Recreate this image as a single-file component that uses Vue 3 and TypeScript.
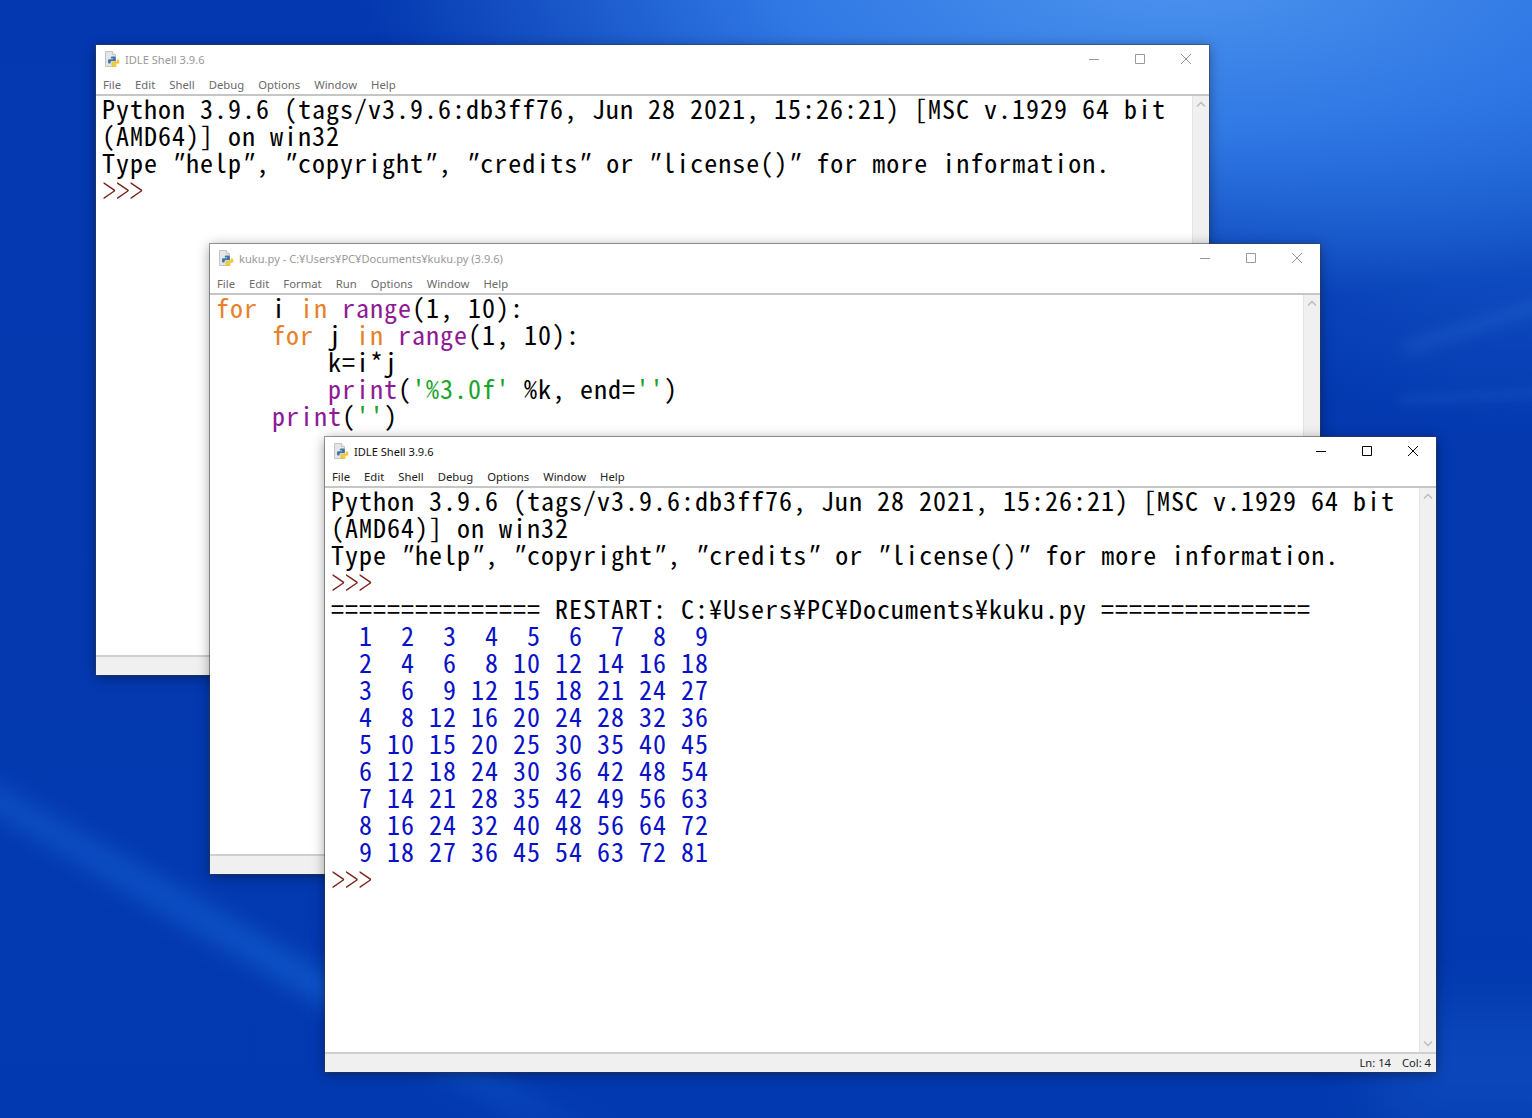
<script setup lang="ts">
interface Seg { t: string; c?: string }
interface Win {
  id: string; title: string; menus: string[]; active: boolean;
  lines: Seg[][]; status?: string[];
}
const plain = (t: string): Seg[] =>
  t.split(/(")/).filter(Boolean).map((p) => (p === '"' ? { t: p, c: 'q' } : { t: p }))
const prompt: Seg[] = [{ t: '>>>', c: 'prompt' }]
const banner = [
  plain('Python 3.9.6 (tags/v3.9.6:db3ff76, Jun 28 2021, 15:26:21) [MSC v.1929 64 bit'),
  plain('(AMD64)] on win32'),
  plain('Type "help", "copyright", "credits" or "license()" for more information.'),
  prompt,
]
const table = Array.from({ length: 9 }, (_, i) =>
  [{ t: Array.from({ length: 9 }, (_, j) => String((i + 1) * (j + 1)).padStart(3, ' ')).join(''), c: 'out' }])
const wins: Win[] = [
  { id: 'w1', title: 'IDLE Shell 3.9.6', active: false, menus: ['File', 'Edit', 'Shell', 'Debug', 'Options', 'Window', 'Help'], lines: banner },
  {
    id: 'w2', title: 'kuku.py - C:¥Users¥PC¥Documents¥kuku.py (3.9.6)', active: false,
    menus: ['File', 'Edit', 'Format', 'Run', 'Options', 'Window', 'Help'],
    lines: [
      [{ t: 'for', c: 'kw' }, { t: ' i ' }, { t: 'in', c: 'kw' }, { t: ' ' }, { t: 'range', c: 'bi' }, { t: '(1, 10):' }],
      [{ t: '    ' }, { t: 'for', c: 'kw' }, { t: ' j ' }, { t: 'in', c: 'kw' }, { t: ' ' }, { t: 'range', c: 'bi' }, { t: '(1, 10):' }],
      plain('        k=i*j'),
      [{ t: '        ' }, { t: 'print', c: 'bi' }, { t: '(' }, { t: "'%3.0f'", c: 'str' }, { t: ' %k, end=' }, { t: "''", c: 'str' }, { t: ')' }],
      [{ t: '    ' }, { t: 'print', c: 'bi' }, { t: '(' }, { t: "''", c: 'str' }, { t: ')' }],
    ],
  },
  {
    id: 'w3', title: 'IDLE Shell 3.9.6', active: true, menus: ['File', 'Edit', 'Shell', 'Debug', 'Options', 'Window', 'Help'],
    status: ['Ln: 14', 'Col: 4'],
    lines: [
      ...banner,
      plain('=============== RESTART: C:¥Users¥PC¥Documents¥kuku.py ==============='),
      ...table,
      prompt,
    ],
  },
]
</script>

<template>
  <div class="desktop">
    <div class="ray r1"></div>
    <div class="ray r2"></div>
    <div class="ray r3"></div>
    <div class="ray r4"></div>
    <div v-for="w in wins" :key="w.id" class="win" :class="[w.id, { inactive: !w.active }]">
      <div class="titlebar">
        <svg class="appicon" width="16" height="17" viewBox="0 0 16 17">
          <path d="M1.500 0.500h7l3 3v12h-10z" fill="#e6e6e6" stroke="#c4c4c4" />
          <path d="M8.500 0.500v3h3" fill="#fafafa" stroke="#c4c4c4" />
          <path d="M8 5.500h2.500a1.300 1.300 0 0 1 1.300 1.300v3.200H8a1.500 1.500 0 0 0-1.500 1.500v1H5.200a1.300 1.300 0 0 1-1.200-1.300v-1.700a1.300 1.300 0 0 1 1.300-1.300h3.700v-0.700H6.800V6.700A1.300 1.300 0 0 1 8 5.500z" fill="#3a76a8" />
          <path d="M12.800 8.500h1.200a1.300 1.300 0 0 1 1.300 1.300v1.700a1.300 1.300 0 0 1-1.300 1.300h-3.700v0.700h2.200v1.200a1.300 1.300 0 0 1-1.300 1.200H8.700a1.300 1.300 0 0 1-1.200-1.200v-2.700a1.500 1.500 0 0 1 1.500-1.500h3.800z" fill="#f2c63a" />
        </svg>
        <span class="title">{{ w.title }}</span>
        <div class="controls">
          <svg width="12" height="12" viewBox="0 0 12 12"><path d="M1 6.500h10" stroke="currentColor" fill="none" /></svg>
          <svg width="12" height="12" viewBox="0 0 12 12"><path d="M1.500 1.500h9v9h-9z" stroke="currentColor" fill="none" /></svg>
          <svg width="12" height="12" viewBox="0 0 12 12"><path d="M1 1l10 10M11 1L1 11" stroke="currentColor" fill="none" /></svg>
        </div>
      </div>
      <div class="menubar">
        <span v-for="m in w.menus" :key="m">{{ m }}</span>
      </div>
      <div class="body">
        <div class="code">
          <div v-for="(l, i) in w.lines" :key="i" class="line">
            <span v-for="(s, k) in l" :key="k" :class="s.c">{{ s.t }}</span>
          </div>
        </div>
        <div class="scroll">
          <svg width="10" height="7" viewBox="0 0 10 7"><path d="M1 5.500l4-4 4 4" fill="none" stroke="#bcbcbc" stroke-width="1.500" /></svg>
          <svg width="10" height="7" viewBox="0 0 10 7"><path d="M1 1.500l4 4 4-4" fill="none" stroke="#bcbcbc" stroke-width="1.500" /></svg>
        </div>
      </div>
      <div class="statusbar">
        <span v-for="s in w.status" :key="s">{{ s }}</span>
      </div>
    </div>
  </div>
</template>

<style>
html, body { margin: 0; padding: 0; }
</style>

<style scoped>
.desktop {
  position: relative;
  width: 1532px;
  height: 1118px;
  overflow: hidden;
  background:
    radial-gradient(ellipse 820px 330px at 1180px -30px, #4d94ee 0%, #3078e4 50%, rgba(20,90,205,0) 100%),
    radial-gradient(ellipse 500px 440px at 1532px 0px, #1f6ada 0%, rgba(15,85,200,0) 100%),
    linear-gradient(180deg, #0438b0 0%, #0339b0 100%);
}
.ray { position: absolute; pointer-events: none; }
.r1 {
  left: -120px; top: 1035px; width: 1100px; height: 30px;
  background: linear-gradient(90deg, rgba(20,100,215,.4), rgba(20,100,215,.6) 40%, rgba(20,100,215,.1) 65%);
  transform: rotate(30deg);
  filter: blur(11px);
}
.r2 {
  left: 1400px; top: 312px; width: 200px; height: 12px;
  background: rgba(60,130,225,.22);
  transform: rotate(-18deg);
  filter: blur(7px);
}
.r3 {
  left: 1400px; top: 391px; width: 200px; height: 8px;
  background: rgba(60,130,225,.16);
  transform: rotate(-3deg);
  filter: blur(5px);
}
.r4 {
  left: 1380px; top: 1010px; width: 220px; height: 120px;
  background: rgba(20,85,200,.5);
  filter: blur(30px);
}
.win {
  position: absolute;
  display: flex;
  flex-direction: column;
  box-sizing: border-box;
  background: #fff;
  box-shadow: 0 2px 12px rgba(0,0,0,.4), 0 0 0 1px rgba(70,70,70,.5);
}
.w1 { left: 96px; top: 45px; width: 1113px; height: 630px; }
.w2 { left: 210px; top: 244px; width: 1110px; height: 630px; }
.w3 { left: 325px; top: 437px; width: 1111px; height: 635px; }
.titlebar {
  height: 28px;
  flex: none;
  display: flex;
  align-items: center;
  padding-left: 8px;
  gap: 5px;
  font: 11.1px "Noto Sans", "Open Sans", sans-serif;
  color: #111;
}
.w1 .title, .w2 .title { color: #999; }
.appicon { flex: none; }
.controls {
  margin-left: auto;
  display: flex;
  gap: 34px;
  padding-right: 17px;
  color: #000;
}
.inactive .controls { color: #999; }
.menubar {
  height: 23px;
  flex: none;
  box-sizing: border-box;
  display: flex;
  align-items: center;
  gap: 14px;
  padding: 1px 0 0 7px;
  border-bottom: 2px solid #c6c6c6;
  font: 11.3px "Noto Sans", "Open Sans", sans-serif;
  color: #222;
}
.inactive .menubar { color: #6a6a6a; }
.body {
  flex: 1;
  min-height: 0;
  display: flex;
}
.code {
  flex: 1;
  min-width: 0;
  margin-top: -2px;
  padding: 0 0 0 6px;
  white-space: pre;
  font-family: "Noto Sans Mono CJK JP", "Noto Sans CJK JP", monospace;
  font-size: 26px;
  letter-spacing: 1px;
  line-height: 27px;
  color: #000;
}
.line { height: 27px; }
.kw { color: #e8812a; }
.bi { color: #8f1a96; }
.str { color: #1aa52a; }
.out { color: #0a12c8; }
.q { font-style: italic; margin: 0 3px 0 -3px; }
.prompt {
  display: inline-block;
  color: #7a1e14;
  font-family: Roboto, "Noto Sans", sans-serif;
  font-weight: 200;
  font-size: 28px;
  letter-spacing: -0.9px;
  transform: scaleY(1.55);
  transform-origin: 50% 56%;
}
.scroll {
  width: 17px;
  flex: none;
  box-sizing: border-box;
  background: #f0f0f0;
  border-left: 1px solid #e4e4e4;
  display: flex;
  flex-direction: column;
  justify-content: space-between;
  align-items: center;
  padding: 5px 0;
}
.statusbar {
  height: 20px;
  flex: none;
  box-sizing: border-box;
  background: #f0f0f0;
  border-top: 2px solid #cfcfcf;
  display: flex;
  justify-content: flex-end;
  align-items: center;
  gap: 11px;
  padding: 0 5px 1px 0;
  font: 11.2px "Noto Sans", "Open Sans", sans-serif;
  color: #222;
}
</style>
